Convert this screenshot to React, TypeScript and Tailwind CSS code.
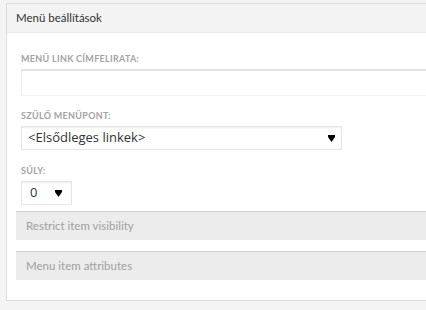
import React from 'react'

// ── Small select with a black ▼ arrow ─────────────────────────────────────
function FakeSelect({ value, className = '' }: { value: string; className?: string }) {
  return (
    <div
      className={`flex h-[24px] items-center justify-between border border-[#e6e6e6] bg-white pl-[6px] pr-[6px] font-['Open_Sans',sans-serif] text-[13px] text-[#333] shadow-[inset_0_1px_2px_rgba(0,0,0,0.07)] ${className}`}
    >
      <span>{value}</span>
      <svg width="7" height="7" viewBox="0 0 7 7" className="mt-[1px]">
        <path d="M0 0 H7 V2 L3.5 7 L0 2 Z" fill="#000" />
      </svg>
    </div>
  )
}

function Label({ children }: { children: React.ReactNode }) {
  return (
    <div className="text-[9px] font-bold uppercase leading-[13px] tracking-[0.3px] text-[#a3a3a3]">
      {children}
    </div>
  )
}

function Collapsed({ title }: { title: string }) {
  return (
    <div className="flex h-[29px] items-center border-t border-[#cfcfcf] bg-[#ececec] pl-[10px] text-[11.5px] text-[#a0a0a0]">
      {title}
    </div>
  )
}

export default function App() {
  return (
    <div
      className="h-[310px] w-[426px] overflow-hidden bg-[#f4f4f4] pl-[6px] pt-[3px]"
      style={{ fontFamily: 'Lato, "Open Sans", sans-serif' }}
    >
      <div className="h-[298px] border-l border-t border-b border-[#dcdcdc] bg-white">
        {/* Header */}
        <div className="flex h-[29px] items-center border-b border-[#ebebeb] bg-[#f3f3f3] pl-[9px] text-[11.5px] text-[#333]">
          Menü beállítások
        </div>

        {/* Body */}
        <div className="pl-[9px] pt-[19px]">
          <div className="pl-[5px]">
            <Label>Menü link címfelirata:</Label>
            <div className="mt-[4px] h-[27px] border-t-2 border-l border-b border-t-[#e2e2e2] border-l-[#ececec] border-b-[#f2f2f2] bg-white" />

            <div className="mt-[13px]">
              <Label>Szülő menüpont:</Label>
            </div>
            <FakeSelect value="<Elsődleges linkek>" className="mt-[4px] w-[321px]" />

            <div className="mt-[14px]">
              <Label>Súly:</Label>
            </div>
            <FakeSelect value="0" className="mt-[4px] w-[51px] pl-[8px] pr-[9px]" />
          </div>

          <div className="mt-[6px] flex flex-col gap-[11px]">
            <Collapsed title="Restrict item visibility" />
            <Collapsed title="Menu item attributes" />
          </div>
        </div>
      </div>
    </div>
  )
}
